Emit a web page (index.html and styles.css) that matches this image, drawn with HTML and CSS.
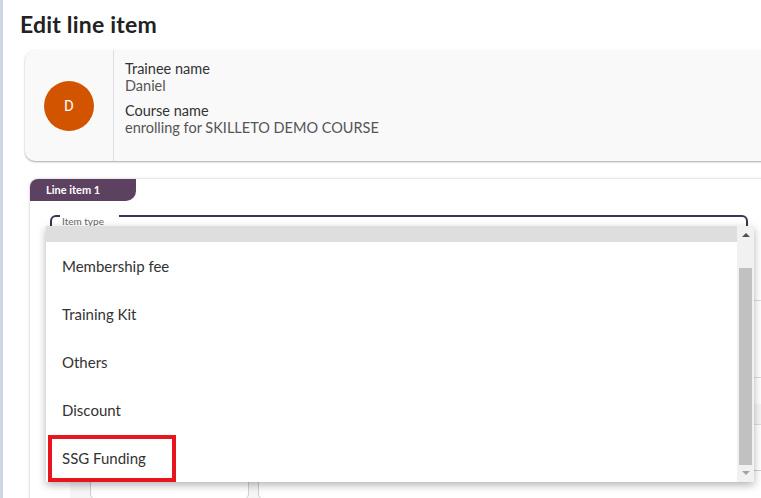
FILE: index.html
```html
<!DOCTYPE html>
<html lang="en">

<head>
    <meta charset="UTF-8">
    <meta name="viewport" content="width=device-width, initial-scale=1.0">
    <title>Edit line item</title>
    <link rel="stylesheet" href="styles.css">
</head>

<body>
    <div class="layout">
        <div class="side-strip"></div>
        <main class="page">
            <h1 class="page-title">Edit line item</h1>

            <div class="info-card">
                <div class="info-avatar">
                    <span class="avatar">D</span>
                </div>
                <div class="info-text">
                    <p class="info-label">Trainee name</p>
                    <p class="info-value">Daniel</p>
                    <p class="info-label second">Course name</p>
                    <p class="info-value">enrolling for SKILLETO DEMO COURSE</p>
                </div>
            </div>

            <div class="line-card">
                <div class="line-tab">Line item 1</div>

                <fieldset class="field">
                    <legend>Item type</legend>
                </fieldset>

                <div class="details">
                    <div class="detail-block first"></div>
                    <div class="detail-block second"></div>
                    <div class="table-head"></div>
                    <div class="table-row">
                        <span class="cell wide"></span>
                        <span class="cell text">SSG Funding</span>
                    </div>
                    <div class="table-row grey">
                        <span class="cell"><span class="input-box"></span></span>
                        <span class="cell"><span class="input-box long"></span></span>
                    </div>
                </div>

                <!-- open select menu -->
                <div class="dropdown">
                    <div class="dropdown-list">
                        <div class="dropdown-head"></div>
                        <ul>
                            <li>Membership fee</li>
                            <li>Training Kit</li>
                            <li>Others</li>
                            <li>Discount</li>
                            <li>SSG Funding</li>
                        </ul>
                    </div>
                    <div class="scrollbar">
                        <span class="arrow up"></span>
                        <span class="thumb"></span>
                        <span class="arrow down"></span>
                    </div>
                    <div class="mark"></div>
                </div>
            </div>
        </main>
    </div>
</body>

</html>
```

FILE: styles.css
```css
* {
    margin: 0;
    padding: 0;
    box-sizing: border-box;
    list-style: none;
}

html,
body {
    height: 498px;
    overflow: hidden;
}

body {
    background-color: white;
    font-family: Lato, "Open Sans", sans-serif;
    color: #333;
}

.layout {
    display: flex;
    height: 498px;
}

.side-strip {
    width: 3px;
    flex-shrink: 0;
    background-color: #cdd6e9;
}

.page {
    width: 820px;
    flex-shrink: 0;
    padding: 11px 0 0 17px;
}

.page-title {
    font-size: 23px;
    font-weight: 700;
    line-height: 26px;
    letter-spacing: 0.2px;
    color: #222;
}

/* trainee card */
.info-card {
    display: flex;
    height: 111px;
    margin: 13px 0 0 5px;
    background-color: #f9f9f9;
    border-radius: 10px;
    box-shadow: 0 1px 2px rgba(0, 0, 0, 0.35);
}

.info-avatar {
    width: 89px;
    display: flex;
    align-items: center;
    justify-content: center;
    border-right: 1px solid #dedede;
}

.avatar {
    width: 50px;
    height: 50px;
    border-radius: 50%;
    background-color: #d35400;
    color: white;
    font-family: Roboto, sans-serif;
    font-size: 15px;
    display: flex;
    align-items: center;
    justify-content: center;
}

.info-text {
    padding: 10px 0 0 11px;
}

.info-label {
    font-size: 14.5px;
    line-height: 17px;
    color: #333;
}

.info-label.second {
    margin-top: 8px;
}

.info-value {
    font-size: 14.5px;
    line-height: 17px;
    color: #555;
}

/* line item card */
.line-card {
    position: relative;
    height: 340px;
    margin: 18px 0 0 10px;
    background-color: white;
    border-radius: 8px 0 0 0;
    box-shadow: 0 0 3px rgba(0, 0, 0, 0.25);
}

.line-tab {
    width: 106px;
    height: 22px;
    padding-left: 16px;
    line-height: 22px;
    font-size: 11px;
    font-weight: 700;
    color: white;
    background-color: #5c4160;
    border-radius: 8px 0 10px 0;
}

.field {
    width: 698px;
    height: 44px;
    margin: 4px 0 0 20px;
    padding: 0 8px;
    border: 2px solid #3b3452;
    border-radius: 6px;
}

.field legend {
    padding: 10px 15px 0 2px;
    font-size: 10px;
    line-height: 12px;
    color: #666;
}

.details {
    margin: 0 0 0 40px;
}

.detail-block {
    border-bottom: 1px solid #dddddd;
}

.detail-block.first {
    height: 52px;
}

.detail-block.second {
    height: 77px;
    margin-bottom: 26px;
}

.table-head {
    height: 21px;
    background-color: #f5f5f5;
    border-bottom: 1px solid #dddddd;
}

.table-row {
    display: flex;
    height: 45px;
    align-items: center;
}

.table-row .cell {
    width: 180px;
    padding-left: 20px;
}

.table-row .cell.wide {
    width: 685px;
}

.table-row .cell.text {
    font-size: 15px;
    padding: 18px 0 0 0;
    color: #444;
    white-space: nowrap;
}

.table-row.grey {
    align-items: flex-start;
    background-color: #f5f5f5;
}

.table-row.grey .cell + .cell {
    padding-left: 9px;
    width: 600px;
}

.input-box {
    display: block;
    width: 159px;
    height: 30px;
    background-color: white;
    border: 1px solid #cfcfcf;
    border-radius: 6px;
}

.input-box.long {
    width: 590px;
}

/* open select menu */
.dropdown {
    position: absolute;
    left: 16px;
    top: 47px;
    width: 708px;
    height: 256px;
    display: flex;
    background-color: white;
    box-shadow: 0 3px 8px rgba(0, 0, 0, 0.3);
}

.dropdown-list {
    flex: 1;
}

.dropdown-head {
    height: 16px;
    background-color: #dedede;
}

.dropdown-list li {
    height: 48px;
    line-height: 48px;
    padding-left: 16px;
    font-size: 15px;
    color: #333;
}

.scrollbar {
    width: 17px;
    display: flex;
    flex-direction: column;
    align-items: center;
    background-color: #f1f1f1;
}

.scrollbar .arrow {
    width: 0;
    height: 0;
    border-left: 4px solid transparent;
    border-right: 4px solid transparent;
}

.scrollbar .arrow.up {
    margin: 7px 0 31px;
    border-bottom: 4px solid #505050;
}

.scrollbar .thumb {
    width: 13px;
    flex: 1;
    background-color: #c1c1c1;
}

.scrollbar .arrow.down {
    margin: 6px 0 7px;
    border-top: 4px solid #a3a3a3;
}

.mark {
    position: absolute;
    left: 2px;
    top: 209px;
    width: 128px;
    height: 47px;
    border: 4px solid #e8141e;
}
```
